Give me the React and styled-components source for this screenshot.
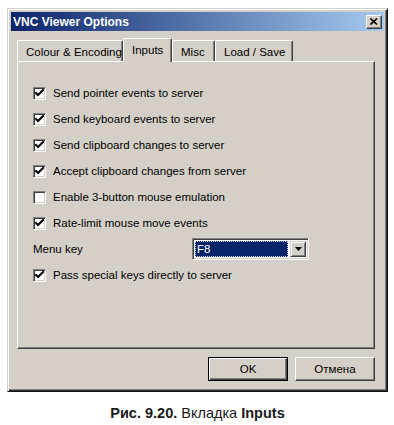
import React from 'react';
import styled, { createGlobalStyle } from 'styled-components';

const Global = createGlobalStyle`
  html, body { margin: 0; padding: 0; background: #fff; }
  body { font-family: "Liberation Sans", Arial, sans-serif; }
`;

const Page = styled.div`
  width: 394px;
  height: 425px;
  box-sizing: border-box;
  padding: 8px 0 0 1px;
  display: flex;
  flex-direction: column;
  align-items: center;
  overflow: hidden;
`;

const Window = styled.div`
  width: 381px;
  height: 384px;
  box-sizing: border-box;
  background: #d4d0c8;
  border: 1px solid;
  border-color: #d4d0c8 #111 #111 #d4d0c8;
  box-shadow: inset 1px 1px #fff, inset -1px -1px #303030, inset -2px -2px #808080;
  padding: 3px;
  display: flex;
  flex-direction: column;
  font-size: 11.5px;
  color: #000;
`;

const TitleBar = styled.div`
  height: 19px;
  display: flex;
  align-items: center;
  justify-content: space-between;
  padding: 0 2px 0 2px;
  background: linear-gradient(to right, #0a246a, #a6caf0);
`;

const Title = styled.span`
  color: #fff;
  font-weight: bold;
  font-size: 12px;
`;

const CloseButton = styled.div`
  width: 16px;
  height: 14px;
  box-sizing: border-box;
  background: #d4d0c8;
  border: 1px solid;
  border-color: #fff #404040 #404040 #fff;
  box-shadow: inset -1px -1px #808080;
  display: flex;
  align-items: center;
  justify-content: center;
`;

const Body = styled.div`
  display: flex;
  flex-direction: column;
  padding: 7px 9px 0 6px;
`;

const TabRow = styled.div`
  display: flex;
  align-items: flex-end;
  height: 24px;
  margin-bottom: -1px;
  position: relative;
  z-index: 1;
`;

const Tab = styled.div`
  box-sizing: border-box;
  width: ${p => p.$w}px;
  height: ${p => (p.$active ? 24 : 21)}px;
  margin-bottom: ${p => (p.$active ? 0 : 1)}px;
  background: #d4d0c8;
  border-top: 1px solid #fff;
  border-left: 1px solid #fff;
  border-right: 1px solid #404040;
  border-radius: 2px 2px 0 0;
  box-shadow: inset -1px 0 #808080;
  padding: 5px 0 0 8px;
  white-space: nowrap;
  line-height: 13px;
`;

const Panel = styled.div`
  height: 288px;
  box-sizing: border-box;
  border: 1px solid;
  border-color: #fff #404040 #404040 #fff;
  box-shadow: inset -1px -1px #808080;
  padding: 21px 0 0 15px;
  display: flex;
  flex-direction: column;
  gap: 6px;
`;

const Row = styled.div`
  height: 20px;
  display: flex;
  align-items: center;
  gap: 7px;
`;

const Box = styled.div`
  width: 13px;
  height: 13px;
  box-sizing: border-box;
  background: #fff;
  border: 1px solid;
  border-color: #808080 #fff #fff #808080;
  box-shadow: inset 1px 1px #404040, inset -1px -1px #d4d0c8;
  display: flex;
  align-items: center;
  justify-content: center;
  flex: none;
`;

const Label = styled.span`
  width: ${p => (p.$w ? `${p.$w}px` : 'auto')};
  flex: none;
`;

const Combo = styled.div`
  width: 117px;
  height: 22px;
  box-sizing: border-box;
  margin: -1px 0;
  background: #fff;
  border: 1px solid;
  border-color: #808080 #fff #fff #808080;
  box-shadow: inset 1px 1px #404040, inset -1px -1px #d4d0c8;
  padding: 2px;
  display: flex;
  gap: 2px;
`;

const ComboField = styled.div`
  flex: 1;
  background: #0a246a;
  color: #fff;
  outline: 1px dotted #d0d0d0;
  outline-offset: -1px;
  padding-left: 2px;
  display: flex;
  align-items: center;
`;

const ComboButton = styled.div`
  width: 16px;
  box-sizing: border-box;
  background: #d4d0c8;
  border: 1px solid;
  border-color: #d4d0c8 #404040 #404040 #d4d0c8;
  box-shadow: inset 1px 1px #fff, inset -1px -1px #808080;
  display: flex;
  align-items: center;
  justify-content: center;
`;

const ButtonRow = styled.div`
  display: flex;
  justify-content: flex-end;
  gap: 7px;
  margin-top: 8px;
`;

const Button = styled.div`
  width: 80px;
  height: 24px;
  box-sizing: border-box;
  background: #d4d0c8;
  border: 1px solid;
  border-color: ${p => (p.$default ? '#000' : '#fff #404040 #404040 #fff')};
  box-shadow: ${p =>
    p.$default
      ? 'inset 1px 1px #fff, inset -1px -1px #404040, inset -2px -2px #808080'
      : 'inset -1px -1px #808080'};
  display: flex;
  align-items: center;
  justify-content: center;
`;

const Caption = styled.div`
  margin-top: 11px;
  width: 381px;
  text-align: center;
  font-family: "Liberation Sans", Arial, sans-serif;
  font-size: 14.5px;
  line-height: 20px;
  color: #1a1a1a;
`;

const Bold = styled.b`
  font-weight: bold;
`;

const Check = () => (
  <svg width="9" height="9" viewBox="0 0 9 9">
    <path d="M1 4 L3 6 L8 1" fill="none" stroke="#000" strokeWidth="2" strokeLinecap="square" />
  </svg>
);

const CheckRow = ({ checked, children }) => (
  <Row>
    <Box>{checked && <Check />}</Box>
    <Label>{children}</Label>
  </Row>
);

export default function App() {
  return (
    <Page>
      <Global />
      <Window>
        <TitleBar>
          <Title>VNC Viewer Options</Title>
          <CloseButton>
            <svg width="8" height="7" viewBox="0 0 8 7">
              <path d="M0.5 0.5 L7 6.5 M7 0.5 L0.5 6.5" stroke="#000" strokeWidth="1.6" />
            </svg>
          </CloseButton>
        </TitleBar>
        <Body>
          <TabRow>
            <Tab $w={106}>Colour &amp; Encoding</Tab>
            <Tab $w={49} $active>Inputs</Tab>
            <Tab $w={43}>Misc</Tab>
            <Tab $w={78}>Load / Save</Tab>
          </TabRow>
          <Panel>
            <CheckRow checked>Send pointer events to server</CheckRow>
            <CheckRow checked>Send keyboard events to server</CheckRow>
            <CheckRow checked>Send clipboard changes to server</CheckRow>
            <CheckRow checked>Accept clipboard changes from server</CheckRow>
            <CheckRow>Enable 3-button mouse emulation</CheckRow>
            <CheckRow checked>Rate-limit mouse move events</CheckRow>
            <Row>
              <Label $w={152}>Menu key</Label>
              <Combo>
                <ComboField>F8</ComboField>
                <ComboButton>
                  <svg width="7" height="4" viewBox="0 0 7 4">
                    <path d="M0 0 H7 L3.5 4 Z" fill="#000" />
                  </svg>
                </ComboButton>
              </Combo>
            </Row>
            <CheckRow checked>Pass special keys directly to server</CheckRow>
          </Panel>
          <ButtonRow>
            <Button $default>OK</Button>
            <Button>Отмена</Button>
          </ButtonRow>
        </Body>
      </Window>
      <Caption>
        <Bold>Рис. 9.20.</Bold> Вкладка <Bold>Inputs</Bold>
      </Caption>
    </Page>
  );
}
